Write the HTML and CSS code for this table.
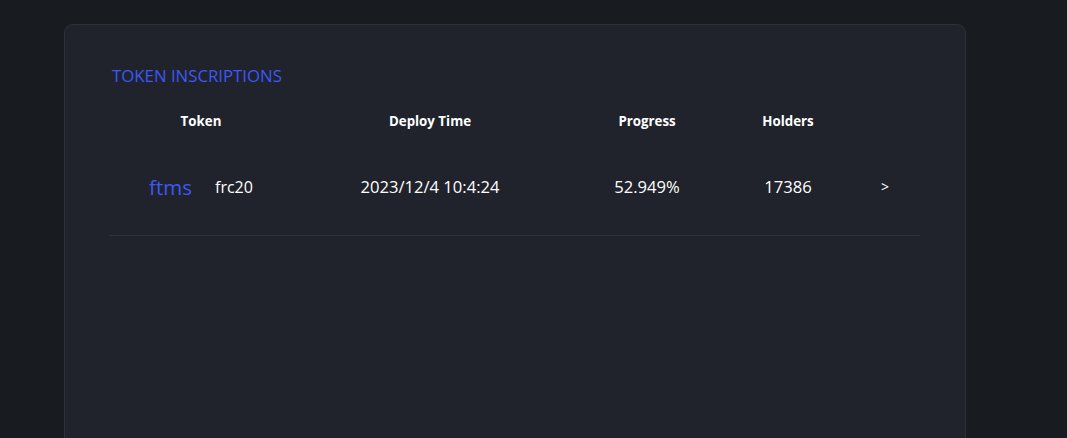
FILE: index.html
```html
<!DOCTYPE html>
<html>
<head>
<meta charset="utf-8">
<link rel="stylesheet" href="styles.css">
</head>
<body>
<div class="page">
  <section class="card">
    <h2 class="title">TOKEN INSCRIPTIONS</h2>
    <div class="table">
      <div class="row head">
        <div class="cell">Token</div>
        <div class="cell">Deploy Time</div>
        <div class="cell">Progress</div>
        <div class="cell">Holders</div>
        <div class="cell"></div>
      </div>
      <div class="row data">
        <div class="cell token"><span class="tick">ftms</span><span class="proto">frc20</span></div>
        <div class="cell">2023/12/4 10:4:24</div>
        <div class="cell">52.949%</div>
        <div class="cell">17386</div>
        <div class="cell arrow">&gt;</div>
      </div>
    </div>
  </section>
</div>
</body>
</html>
```

FILE: styles.css
```css
html, body {
  margin: 0;
  padding: 0;
  background: #181b1f;
  font-family: "Open Sans", "Noto Sans", "Liberation Sans", sans-serif;
  color: #ffffff;
}
.page {
  padding: 24px 0 0 64px;
  height: 438px;
  box-sizing: border-box;
  overflow: hidden;
}
.card {
  width: 902px;
  min-height: 500px;
  box-sizing: border-box;
  background: #20232b;
  border: 1px solid #2e313a;
  border-radius: 9px;
  padding: 40px 45px 0 45px;
}
.title {
  margin: 0 0 0 2px;
  font-size: 16.8px;
  line-height: 22px;
  font-weight: 400;
  color: #3d58f5;
}
.table {
  margin-top: 25px;
}
.row {
  display: grid;
  grid-template-columns: 182px 276px 158px 124px 70px;
  align-items: center;
}
.cell {
  text-align: center;
}
.head {
  font-size: 13.3px;
  line-height: 18px;
  font-weight: 700;
  padding-bottom: 9px;
}
.data {
  font-size: 16.6px;
  line-height: 24px;
  padding: 36px 0;
  border-bottom: 1px solid #30333b;
}
.token {
  display: flex;
  justify-content: center;
  align-items: center;
  gap: 23px;
}
.tick {
  color: #3d58f5;
  font-size: 20.5px;
}
.proto {
  font-size: 16px;
}
.arrow {
  font-size: 14px;
}
```
